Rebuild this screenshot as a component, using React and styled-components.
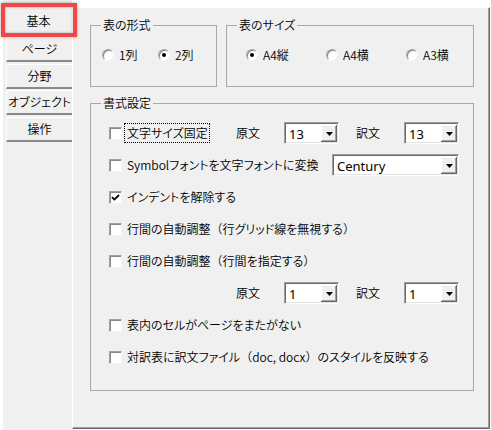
import React from "react"
import styled, { createGlobalStyle } from "styled-components"

const GlobalStyle = createGlobalStyle`
  body {
    margin: 0;
    background: #fff;
    font-family: "Noto Sans CJK JP", "Noto Sans", sans-serif;
    font-size: 12px;
    font-weight: 350;
    color: #000;
    font-feature-settings: "palt" 1;
  }
`

const Screen = styled.div`
  position: relative;
  display: flex;
  width: 491px;
  height: 430px;
  padding-left: 3px;
  box-sizing: border-box;
  background: #fff;
`

const TabColumn = styled.div`
  display: flex;
  flex-direction: column;
  width: 69px;
  padding-top: 3px;
  background: #f0f0f0;
`

const Tab = styled.div`
  box-sizing: border-box;
  display: flex;
  align-items: center;
  justify-content: center;
  flex-shrink: 0;
  height: ${p => (p.$selected ? "34px" : "25px")};
  width: ${p => (p.$selected ? "68px" : "66px")};
  margin-left: ${p => (p.$selected ? "1px" : "3px")};
  margin-top: ${p => p.$gap || 0}px;
  border-top: 1px solid #fff;
  border-left: 1px solid #fff;
  border-bottom: ${p => (p.$selected ? "none" : "2px solid #8a8a8a")};
  background: #f0f0f0;
  line-height: 1;
`

const Highlight = styled.div`
  position: absolute;
  left: 1px;
  top: 3px;
  width: 76px;
  height: 34px;
  box-sizing: border-box;
  border: 4px solid #f04848;
  box-shadow: 0 0 3px rgba(0, 0, 0, 0.35), inset 0 0 3px rgba(0, 0, 0, 0.3);
  pointer-events: none;
`

const Panel = styled.div`
  box-sizing: border-box;
  margin-top: 7px;
  width: 418px;
  height: 422px;
  padding: 10px 0 0 17px;
  background: #f0f0f0;
  border-top: 1px solid #fff;
  border-left: 1px solid #fff;
  border-right: 1px solid #696969;
  border-bottom: 1px solid #696969;
  box-shadow: inset -1px -1px 0 #a0a0a0;
`

const TopRow = styled.div`
  display: flex;
  gap: 9px;
  margin-bottom: 9px;
`

const Group = styled.fieldset`
  box-sizing: border-box;
  width: ${p => p.$w}px;
  min-width: 0;
  margin: 0;
  padding: 0;
  border: 1px solid #a8a8a8;
`

const Legend = styled.legend`
  margin-left: 10px;
  padding: 0 2px;
  font-size: 12px;
  line-height: 14px;
`

const RadioBody = styled.div`
  display: flex;
  align-items: center;
  height: 22px;
  padding: 12px 0 20px ${p => p.$pl}px;
`

const FormatBody = styled.div`
  display: flex;
  flex-direction: column;
  padding: 7px 14px 17px 18px;
`

const RadioItem = styled.label`
  display: flex;
  align-items: center;
  flex: 0 0 ${p => (p.$w ? `${p.$w}px` : "auto")};
`

const RadioCircle = styled.span`
  position: relative;
  box-sizing: border-box;
  width: 12px;
  height: 12px;
  border-radius: 50%;
  background: #fff;
  border: 1px solid;
  border-color: #a0a0a0 #f4f4f4 #f4f4f4 #a0a0a0;
  box-shadow: inset 1px 1px 0 #8a8a8a;

  &::after {
    content: "";
    display: ${p => (p.$on ? "block" : "none")};
    position: absolute;
    left: 3px;
    top: 3px;
    width: 4px;
    height: 4px;
    border-radius: 50%;
    background: #000;
  }
`

const RadioText = styled.span`
  margin-left: 5px;
  line-height: 1;
`

const Row = styled.div`
  display: flex;
  align-items: center;
  height: 32px;
  padding-left: ${p => p.$indent || 0}px;
`

const CheckItem = styled.label`
  display: flex;
  align-items: center;
  flex: 0 0 ${p => (p.$w ? `${p.$w}px` : "auto")};
`

const Box = styled.span`
  display: flex;
  align-items: center;
  justify-content: center;
  box-sizing: border-box;
  width: 13px;
  height: 13px;
  background: #fff;
  border: 1px solid;
  border-color: #a0a0a0 #f4f4f4 #f4f4f4 #a0a0a0;
  box-shadow: inset 1px 1px 0 #8a8a8a;
`

const CheckText = styled.span`
  box-sizing: border-box;
  height: 20px;
  margin-left: 2px;
  padding: 0 1px 0 2px;
  line-height: 18px;
  white-space: nowrap;
  border: 1px ${p => (p.$focus ? "dotted #000" : "solid transparent")};
`

/* full-width brackets keep their side bearings, as in the Windows font */
const Wide = styled.span`
  font-feature-settings: normal;
`

const FieldLabel = styled.span`
  flex: 0 0 48px;
  margin-left: ${p => p.$ml || 0}px;
  line-height: 1;
`

const Select = styled.div`
  box-sizing: border-box;
  display: flex;
  align-items: stretch;
  flex: 0 0 ${p => p.$w}px;
  height: 22px;
  margin-left: ${p => (p.$push ? "auto" : "0")};
  padding: 2px 1px 1px 2px;
  background: #fff;
  border: 1px solid;
  border-color: #a0a0a0 #fff #fff #a0a0a0;
  box-shadow: inset 1px 1px 0 #696969, inset -1px -1px 0 #e3e3e3;
`

const SelectText = styled.span`
  flex: 1;
  display: flex;
  align-items: center;
  padding-left: 2px;
  font-size: 13px;
  font-weight: 400;
  font-family: "Noto Sans", "Noto Sans CJK JP", sans-serif;
`

const DropButton = styled.span`
  flex: 0 0 16px;
  display: flex;
  align-items: center;
  justify-content: center;
  background: #f0f0f0;
  box-shadow: inset -1px -1px 0 #696969, inset 1px 1px 0 #fff,
    inset -2px -2px 0 #a0a0a0;
`

const Arrow = () => (
  <svg width="7" height="4" viewBox="0 0 7 4">
    <polygon points="0,0 7,0 3.5,4" fill="#000" />
  </svg>
)

const Check = () => (
  <svg width="9" height="9" viewBox="0 0 9 9">
    <path d="M1 4.2 L3.4 6.6 L8 2" stroke="#000" strokeWidth="1.8" fill="none" />
  </svg>
)

function Dropdown({ w, value, push }) {
  return (
    <Select $w={w} $push={push}>
      <SelectText>{value}</SelectText>
      <DropButton>
        <Arrow />
      </DropButton>
    </Select>
  )
}

function CheckOption({ children, on, focus, w }) {
  return (
    <CheckItem $w={w}>
      <Box>{on && <Check />}</Box>
      <CheckText $focus={focus}>{children}</CheckText>
    </CheckItem>
  )
}

function SizePair({ value }) {
  return (
    <>
      <FieldLabel>原文</FieldLabel>
      <Dropdown w={55} value={value} />
      <FieldLabel $ml={17}>訳文</FieldLabel>
      <Dropdown w={55} value={value} />
    </>
  )
}

export default function App() {
  return (
    <Screen>
      <GlobalStyle />
      <TabColumn>
        <Tab $selected>基本</Tab>
        <Tab>ページ</Tab>
        <Tab $gap={1.5}>分野</Tab>
        <Tab $gap={1.5}>オブジェクト</Tab>
        <Tab $gap={1.5}>操作</Tab>
      </TabColumn>

      <Panel>
        <TopRow>
          <Group $w={127}>
            <Legend>表の形式</Legend>
            <RadioBody $pl={11}>
              <RadioItem $w={56}>
                <RadioCircle />
                <RadioText>1列</RadioText>
              </RadioItem>
              <RadioItem>
                <RadioCircle $on />
                <RadioText>2列</RadioText>
              </RadioItem>
            </RadioBody>
          </Group>
          <Group $w={248}>
            <Legend>表のサイズ</Legend>
            <RadioBody $pl={19}>
              <RadioItem $w={80}>
                <RadioCircle $on />
                <RadioText>A4縦</RadioText>
              </RadioItem>
              <RadioItem $w={80}>
                <RadioCircle />
                <RadioText>A4横</RadioText>
              </RadioItem>
              <RadioItem>
                <RadioCircle />
                <RadioText>A3横</RadioText>
              </RadioItem>
            </RadioBody>
          </Group>
        </TopRow>

        <Group $w={384}>
          <Legend>書式設定</Legend>
          <FormatBody>
            <Row>
              <CheckOption w={127} focus>文字サイズ固定</CheckOption>
              <SizePair value="13" />
            </Row>
            <Row>
              <CheckOption>Symbolフォントを文字フォントに変換</CheckOption>
              <Dropdown w={127} value="Century" push />
            </Row>
            <Row>
              <CheckOption on>インデントを解除する</CheckOption>
            </Row>
            <Row>
              <CheckOption>
                行間の自動調整<Wide>（</Wide>行グリッド線を無視する<Wide>）</Wide>
              </CheckOption>
            </Row>
            <Row>
              <CheckOption>
                行間の自動調整<Wide>（</Wide>行間を指定する<Wide>）</Wide>
              </CheckOption>
            </Row>
            <Row $indent={127}>
              <SizePair value="1" />
            </Row>
            <Row>
              <CheckOption>表内のセルがページをまたがない</CheckOption>
            </Row>
            <Row>
              <CheckOption>
                対訳表に訳文ファイル<Wide>（</Wide>doc, docx<Wide>）</Wide>のスタイルを反映する
              </CheckOption>
            </Row>
          </FormatBody>
        </Group>
      </Panel>

      <Highlight />
    </Screen>
  )
}
